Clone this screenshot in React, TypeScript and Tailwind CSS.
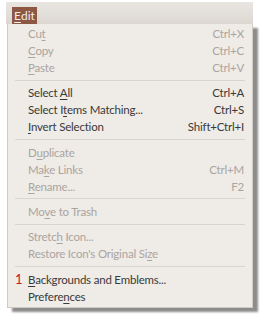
import React from "react";

type Item = {
  label: React.ReactNode;
  shortcut?: string;
  disabled?: boolean;
  badge?: string;
};

const u = (s: string) => <span className="underline underline-offset-2">{s}</span>;

const groups: Item[][] = [
  [
    { label: <>Cu{u("t")}</>, shortcut: "Ctrl+X", disabled: true },
    { label: <>{u("C")}opy</>, shortcut: "Ctrl+C", disabled: true },
    { label: <>{u("P")}aste</>, shortcut: "Ctrl+V", disabled: true },
  ],
  [
    { label: <>Select {u("A")}ll</>, shortcut: "Ctrl+A" },
    { label: <>Select I{u("t")}ems Matching...</>, shortcut: "Ctrl+S" },
    { label: <>{u("I")}nvert Selection</>, shortcut: "Shift+Ctrl+I" },
  ],
  [
    { label: <>D{u("u")}plicate</>, disabled: true },
    { label: <>Ma{u("k")}e Links</>, shortcut: "Ctrl+M", disabled: true },
    { label: <>{u("R")}ename...</>, shortcut: "F2", disabled: true },
  ],
  [{ label: <>Mo{u("v")}e to Trash</>, disabled: true }],
  [
    { label: <>Stretc{u("h")} Icon...</>, disabled: true },
    { label: <>Restore Icon's Original Si{u("z")}e</>, disabled: true },
  ],
  [
    { label: <>{u("B")}ackgrounds and Emblems...</>, badge: "1" },
    { label: <>Prefere{u("n")}ces</> },
  ],
];

function Row({ item }: { item: Item }) {
  return (
    <div
      className={`relative flex h-[17px] items-center pl-[20px] pr-[8px] ${
        item.disabled ? "text-[#aaa5a0]" : "text-[#3a3a3a]"
      }`}
    >
      {item.badge && (
        <span className="absolute left-[7px] text-[13px] tracking-normal text-[#d0102a]">{item.badge}</span>
      )}
      <span>{item.label}</span>
      {item.shortcut && <span className="ml-auto">{item.shortcut}</span>}
    </div>
  );
}

export default function App() {
  return (
    <div
      className="h-[320px] w-[266px] overflow-hidden bg-white pt-[2px]"
      style={{ fontFamily: 'Lato, "Noto Sans", sans-serif' }}
    >
      <div className="ml-[6px] flex h-[22px] w-[247px] items-end bg-gradient-to-b from-[#e9e6e2] to-[#dcd7d1] pl-[6px]">
        <div className="flex h-[17px] w-[25px] items-center justify-center bg-[#8c5843] text-[12px] text-[#f4ece8]">
          {u("E")}dit
        </div>
      </div>
      <div className="ml-[7px] w-[246px] border border-t-0 border-[#cfcac4] bg-[#efebe7] pb-[2px] pt-[1px] text-[11.5px] tracking-[-0.2px] shadow-[5px_4px_2px_rgba(0,0,0,0.45)]">
        {groups.map((g, gi) => (
          <div key={gi}>
            {gi > 0 && (
              <div className="flex h-[8.4px] items-center px-[7px]">
                <div className="h-px w-full bg-[#d9d4cf]" />
              </div>
            )}
            {g.map((it, i) => (
              <Row key={i} item={it} />
            ))}
          </div>
        ))}
      </div>
    </div>
  );
}
